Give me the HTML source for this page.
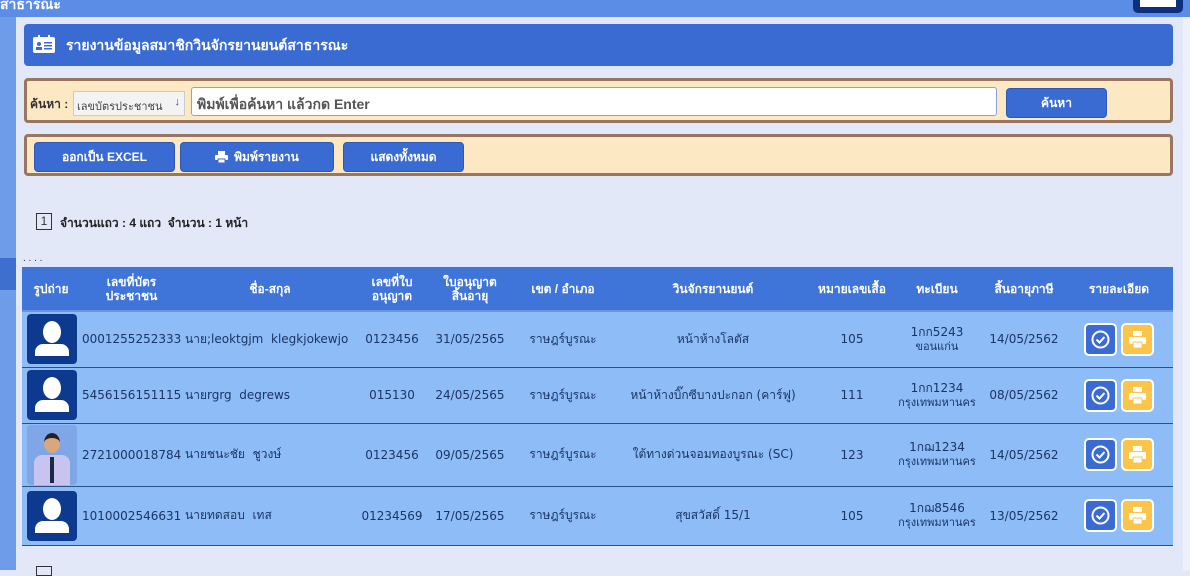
<!DOCTYPE html>
<html><head><meta charset="utf-8"><style>
*{box-sizing:border-box;margin:0;padding:0}
body{width:1190px;height:570px;overflow:hidden;background:#e3e8f8;font-family:"Liberation Sans","Noto Sans CJK SC",sans-serif;position:relative;font-size:13px}
.abs{position:absolute}
.topbar{left:0;top:0;width:1190px;height:17px;background:#5b8ce6}
.lstrip{left:0;top:17px;width:16px;height:553px;background:#6e9ce9}
.panel{left:24px;width:1149px;border-radius:4px}
.btn{position:absolute;background:#3a6bd3;color:#fff;border-radius:4px;font-size:12px;font-weight:bold;display:flex;align-items:center;justify-content:center;border:1px solid #2b58b8}
table{position:absolute;left:22px;top:267px;width:1151px;border-collapse:collapse;table-layout:fixed}
th{background:#3f74d9;color:#fff;font-size:12px;font-weight:bold;height:44px;line-height:14px;border-bottom:2px solid #6b95e0}
td{background:#8dbcf6;color:#1b3566;font-size:12px;text-align:center;border-bottom:1px solid #2a4f8f;padding:0;font-family:"DejaVu Sans","Noto Sans CJK SC",sans-serif}
td.n{font-size:12px;white-space:nowrap}
.ph{width:50px;height:50px;background:#0d3a8f;border-radius:4px;margin-left:5px;position:relative;overflow:hidden}
.ic{display:inline-block;width:33px;height:33px;border:2px solid #fff;border-radius:5px;vertical-align:middle;margin:0 2px;position:relative}
.ic svg{position:absolute;left:5px;top:5px}
</style></head><body>
<div class="abs topbar"></div>
<div class="abs" style="left:0;top:-6px;color:#fff;font-weight:bold;font-size:14px">สาธารณะ</div>
<div class="abs" style="left:1133px;top:-4px;width:50px;height:17px;background:#0d2f7c;border-radius:5px"><div style="margin:0 7px;height:11px;background:#fff"></div></div>
<div class="abs lstrip"></div>
<div class="abs" style="left:0;top:258px;width:16px;height:32px;background:#3e6fcf"></div>
<div class="abs" style="left:1183px;top:17px;width:7px;height:553px;background:#eef1fb"></div>

<div class="abs panel" style="top:24px;height:42px;background:#3a6bd3;color:#fff;font-weight:bold;font-size:14px;padding:11px 0 0 42px">รายงานข้อมูลสมาชิกวินจักรยานยนต์สาธารณะ
<svg class="abs" style="left:9px;top:11px" width="22" height="18" viewBox="0 0 22 18"><rect x="0" y="2" width="22" height="16" rx="2" fill="#fff"/><rect x="5" y="0" width="2" height="4" fill="#fff"/><rect x="15" y="0" width="2" height="4" fill="#fff"/><circle cx="6" cy="9" r="2" fill="#3a6bd3"/><rect x="3" y="12" width="6" height="3" fill="#3a6bd3"/><rect x="11" y="7" width="8" height="1.5" fill="#3a6bd3"/><rect x="11" y="10" width="8" height="1.5" fill="#3a6bd3"/><rect x="11" y="13" width="8" height="1.5" fill="#3a6bd3"/></svg></div>

<div class="abs panel" style="top:78px;height:45px;background:#fde8c4;border:3px solid #9a7560">
<div class="abs" style="left:3px;top:14px;font-size:12px;font-weight:bold;color:#333">ค้นหา :</div>
<div class="abs" style="left:46px;top:10px;width:112px;height:25px;background:#f3f3f3;border:1px solid #ccc;font-size:11px;color:#444;padding:5px 0 0 3px">เลขบัตรประชาชน <span style="color:#2350b0;position:absolute;right:4px;top:4px;font-weight:bold">↓</span></div>
<div class="abs" style="left:164px;top:6px;width:806px;height:29px;background:#fff;border:1px solid #8aa2d8;border-radius:3px;font-size:14px;font-weight:bold;color:#555;padding:6px 0 0 5px">พิมพ์เพื่อค้นหา แล้วกด Enter</div>
<div class="btn" style="left:979px;top:7px;width:101px;height:30px">ค้นหา</div>
</div>

<div class="abs panel" style="top:134px;height:42px;background:#fde8c4;border:3px solid #9a7560">
<div class="btn" style="left:7px;top:5px;width:141px;height:30px">ออกเป็น EXCEL</div>
<div class="btn" style="left:153px;top:5px;width:154px;height:30px"><svg width="13" height="12" viewBox="0 0 13 12" style="margin-right:6px"><rect x="3" y="0" width="7" height="4" fill="#fff"/><rect x="0" y="4" width="13" height="5" rx="1" fill="#fff"/><rect x="3" y="8" width="7" height="4" fill="#fff" stroke="#3a6bd3" stroke-width="1"/></svg>พิมพ์รายงาน</div>
<div class="btn" style="left:316px;top:5px;width:121px;height:30px">แสดงทั้งหมด</div>
</div>

<div class="abs" style="left:36px;top:213px;width:16px;height:17px;border:1px solid #333;font-size:12px;text-align:center;line-height:15px;color:#333">1</div>
<div class="abs" style="left:60px;top:214px;font-size:12px;color:#222;font-weight:bold">จำนวนแถว : 4 แถว &nbsp;จำนวน : 1 หน้า</div>
<div class="abs" style="left:23px;top:253px;font-size:10px;color:#333">. . . .</div>

<table>
<colgroup><col style="width:58px"><col style="width:103px"><col style="width:174px"><col style="width:70px"><col style="width:86px"><col style="width:100px"><col style="width:200px"><col style="width:78px"><col style="width:92px"><col style="width:82px"><col></colgroup>
<tr><th>รูปถ่าย</th><th>เลขที่บัตร<br>ประชาชน</th><th>ชื่อ-สกุล</th><th>เลขที่ใบ<br>อนุญาต</th><th>ใบอนุญาต<br>สิ้นอายุ</th><th>เขต / อำเภอ</th><th>วินจักรยานยนต์</th><th>หมายเลขเสื้อ</th><th>ทะเบียน</th><th>สิ้นอายุภาษี</th><th>รายละเอียด</th></tr>
<tr style="height:56px"><td><div class="ph"><div class="abs" style="left:16px;top:7px;width:18px;height:22px;background:#fff;border-radius:50%"></div><div class="abs" style="left:8px;top:30px;width:34px;height:12px;background:#fff;border-radius:8px 8px 0 0"></div></div></td><td class="n" style="text-align:left;padding-left:2px">0001255252333</td><td class="n" style="text-align:left;padding-left:2px">นาย;leoktgjm &nbsp;klegkjokewjo</td><td class="n">0123456</td><td class="n">31/05/2565</td><td>ราษฎร์บูรณะ</td><td>หน้าห้างโลตัส</td><td class="n">105</td><td style="line-height:14px">1กก5243<br><span style="font-size:11px">ขอนแก่น</span></td><td class="n">14/05/2562</td><td><span class="ic" style="background:#3a6bd3"><svg width="19" height="19" viewBox="0 0 19 19"><circle cx="9.5" cy="9.5" r="8" fill="none" stroke="#fff" stroke-width="2"/><path d="M5.5 9.5l3 3 5-5.5" fill="none" stroke="#fff" stroke-width="2"/></svg></span><span class="ic" style="background:#fcc54a"><svg width="19" height="19" viewBox="0 0 19 19"><rect x="5" y="1" width="9" height="5" fill="#fff"/><rect x="1" y="7" width="17" height="7" rx="1" fill="#fff"/><rect x="5" y="12" width="9" height="6" fill="#fff" stroke="#fcc54a"/></svg></span></td></tr>
<tr style="height:56px"><td><div class="ph"><div class="abs" style="left:16px;top:7px;width:18px;height:22px;background:#fff;border-radius:50%"></div><div class="abs" style="left:8px;top:30px;width:34px;height:12px;background:#fff;border-radius:8px 8px 0 0"></div></div></td><td class="n" style="text-align:left;padding-left:2px">5456156151115</td><td class="n" style="text-align:left;padding-left:2px">นายrgrg &nbsp;degrews</td><td class="n">015130</td><td class="n">24/05/2565</td><td>ราษฎร์บูรณะ</td><td>หน้าห้างบิ๊กซีบางปะกอก (คาร์ฟู)</td><td class="n">111</td><td style="line-height:14px">1กก1234<br><span style="font-size:11px">กรุงเทพมหานคร</span></td><td class="n">08/05/2562</td><td><span class="ic" style="background:#3a6bd3"><svg width="19" height="19" viewBox="0 0 19 19"><circle cx="9.5" cy="9.5" r="8" fill="none" stroke="#fff" stroke-width="2"/><path d="M5.5 9.5l3 3 5-5.5" fill="none" stroke="#fff" stroke-width="2"/></svg></span><span class="ic" style="background:#fcc54a"><svg width="19" height="19" viewBox="0 0 19 19"><rect x="5" y="1" width="9" height="5" fill="#fff"/><rect x="1" y="7" width="17" height="7" rx="1" fill="#fff"/><rect x="5" y="12" width="9" height="6" fill="#fff" stroke="#fcc54a"/></svg></span></td></tr>
<tr style="height:63px"><td><div class="ph" style="height:60px;background:#7fa6e6"><div class="abs" style="left:17px;top:8px;width:16px;height:20px;background:#d9a77e;border-radius:50%;border-top:5px solid #222"></div><div class="abs" style="left:7px;top:30px;width:36px;height:30px;background:#c8c4ef;border-radius:8px 8px 0 0"></div><div class="abs" style="left:23px;top:32px;width:4px;height:26px;background:#1c2a4a"></div></div></td><td class="n" style="text-align:left;padding-left:2px">2721000018784</td><td class="n" style="text-align:left;padding-left:2px">นายชนะชัย &nbsp;ชูวงษ์</td><td class="n">0123456</td><td class="n">09/05/2565</td><td>ราษฎร์บูรณะ</td><td>ใต้ทางด่วนจอมทองบูรณะ (SC)</td><td class="n">123</td><td style="line-height:14px">1กฌ1234<br><span style="font-size:11px">กรุงเทพมหานคร</span></td><td class="n">14/05/2562</td><td><span class="ic" style="background:#3a6bd3"><svg width="19" height="19" viewBox="0 0 19 19"><circle cx="9.5" cy="9.5" r="8" fill="none" stroke="#fff" stroke-width="2"/><path d="M5.5 9.5l3 3 5-5.5" fill="none" stroke="#fff" stroke-width="2"/></svg></span><span class="ic" style="background:#fcc54a"><svg width="19" height="19" viewBox="0 0 19 19"><rect x="5" y="1" width="9" height="5" fill="#fff"/><rect x="1" y="7" width="17" height="7" rx="1" fill="#fff"/><rect x="5" y="12" width="9" height="6" fill="#fff" stroke="#fcc54a"/></svg></span></td></tr>
<tr style="height:59px"><td><div class="ph"><div class="abs" style="left:16px;top:7px;width:18px;height:22px;background:#fff;border-radius:50%"></div><div class="abs" style="left:8px;top:30px;width:34px;height:12px;background:#fff;border-radius:8px 8px 0 0"></div></div></td><td class="n" style="text-align:left;padding-left:2px">1010002546631</td><td class="n" style="text-align:left;padding-left:2px">นายทดสอบ &nbsp;เทส</td><td class="n">01234569</td><td class="n">17/05/2565</td><td>ราษฎร์บูรณะ</td><td>สุขสวัสดิ์ 15/1</td><td class="n">105</td><td style="line-height:14px">1กฌ8546<br><span style="font-size:11px">กรุงเทพมหานคร</span></td><td class="n">13/05/2562</td><td><span class="ic" style="background:#3a6bd3"><svg width="19" height="19" viewBox="0 0 19 19"><circle cx="9.5" cy="9.5" r="8" fill="none" stroke="#fff" stroke-width="2"/><path d="M5.5 9.5l3 3 5-5.5" fill="none" stroke="#fff" stroke-width="2"/></svg></span><span class="ic" style="background:#fcc54a"><svg width="19" height="19" viewBox="0 0 19 19"><rect x="5" y="1" width="9" height="5" fill="#fff"/><rect x="1" y="7" width="17" height="7" rx="1" fill="#fff"/><rect x="5" y="12" width="9" height="6" fill="#fff" stroke="#fcc54a"/></svg></span></td></tr>
</table>
<div class="abs" style="left:36px;top:566px;width:16px;height:10px;border:1px solid #333"></div>
</body></html>
